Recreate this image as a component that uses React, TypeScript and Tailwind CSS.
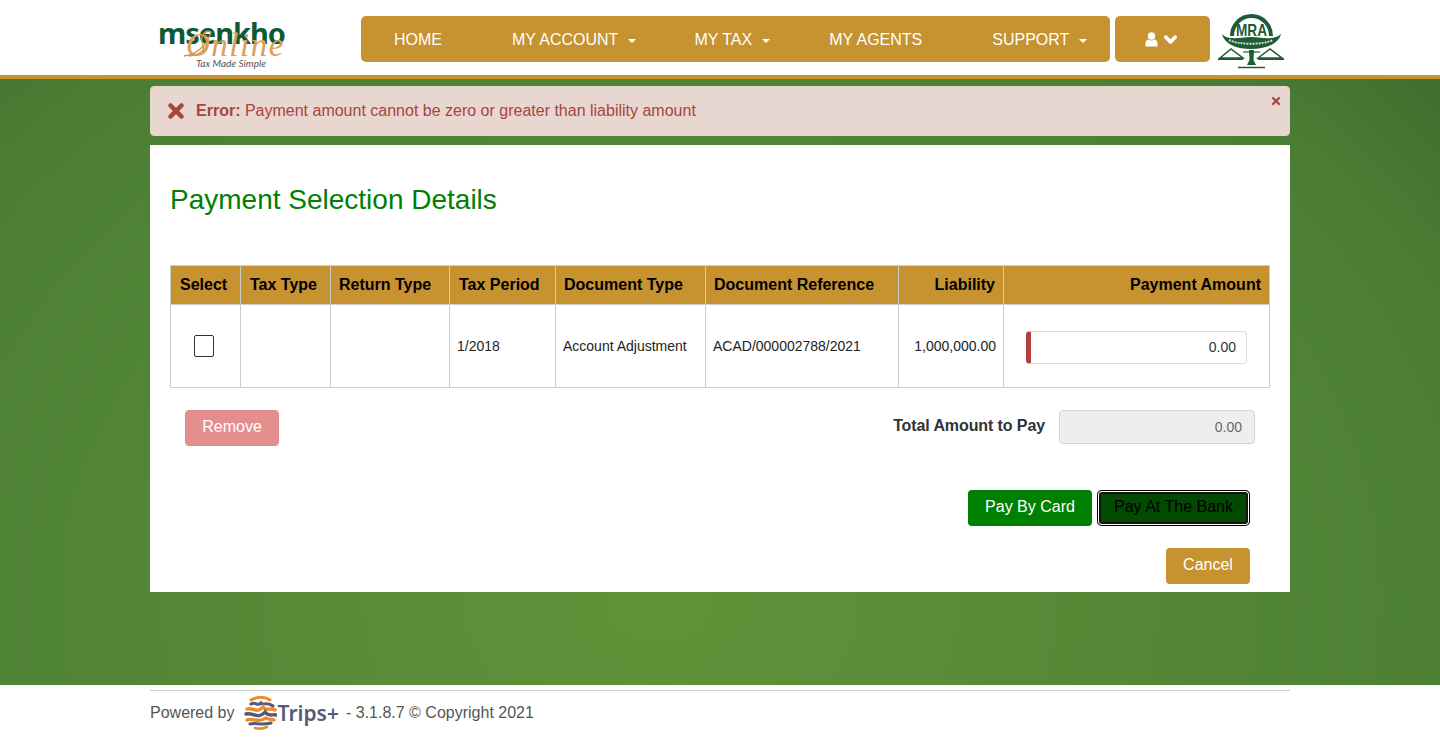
import { ChevronDown, X } from "lucide-react";

const navItems = [
  { label: "HOME", caret: false, gap: "mr-[70px]" },
  { label: "MY ACCOUNT", caret: true, gap: "mr-[58px]" },
  { label: "MY TAX", caret: true, gap: "mr-[59px]" },
  { label: "MY AGENTS", caret: false, gap: "mr-[70px]" },
  { label: "SUPPORT", caret: true, gap: "" },
];

const columns = [
  { label: "Select", width: "w-[70px]", cls: "pl-[9px]" },
  { label: "Tax Type", width: "w-[90px]", cls: "pl-[9px]" },
  { label: "Return Type", width: "w-[119px]", cls: "pl-[8px]" },
  { label: "Tax Period", width: "w-[106px]", cls: "pl-[9px]" },
  { label: "Document Type", width: "w-[150px]", cls: "pl-[8px]" },
  { label: "Document Reference", width: "w-[193px]", cls: "pl-[8px]" },
  { label: "Liability", width: "w-[105px]", cls: "pr-[8px] text-right" },
  { label: "Payment Amount", width: "w-[266px]", cls: "pr-[8px] text-right" },
];

function Caret() {
  return <span className="ml-[10px] inline-block h-0 w-0 border-x-[4px] border-t-[4px] border-x-transparent border-t-white align-middle" />;
}

function MsenkhoLogo() {
  return (
    <div className="relative h-[52px] w-[130px] shrink-0">
      <span className="absolute left-[-1px] top-[-3px] text-[29px] font-bold leading-[34px] tracking-[-1px] text-[#0f5a36] [font-family:'Noto_Sans',sans-serif]">
        msenkho
      </span>
      <span className="absolute left-[27px] top-[8px] text-[33px] italic leading-[36px] tracking-[1.5px] text-[#d9a05c] [font-family:'Liberation_Serif',serif]">
        Online
      </span>
      <svg viewBox="0 0 130 52" className="absolute left-0 top-0 h-[52px] w-[130px]" fill="none">
        <path d="M25 37 C38 36 50 24 52 13 C46 10 40 18 44 26 C47 33 38 36 30 37" stroke="#d5913f" strokeWidth="1.3" />
      </svg>
      <span className="absolute left-[37px] top-[38px] text-[10px] italic leading-[12px] text-[#555] [font-family:'Lato',sans-serif]">
        Tax Made Simple
      </span>
    </div>
  );
}

function MraLogo() {
  return (
    <svg viewBox="0 0 75 62" className="h-[62px] w-[75px] shrink-0" fill="none">
      <path d="M17 26 A19.5 20 0 0 1 56 26" stroke="#1f5c36" strokeWidth="4" />
      <text x="36.5" y="26" textAnchor="middle" fontSize="17" fontWeight="700" fill="#1f5c36" fontFamily="Liberation Sans, sans-serif" textLength="31" lengthAdjust="spacingAndGlyphs">MRA</text>
      <path d="M7 24 C12 30 22 28 36 27 C50 28 60 30 66 24 C64 33 52 39 36 39 C20 39 9 33 7 24 Z" fill="#1f5c36" />
      <path d="M14 30 C24 35 48 35 58 30" stroke="#cfdcd2" strokeWidth="2" strokeDasharray="2 1" />
      <path d="M5 48 L16 39 L28 48 Z M43 48 L55 39 L67 48 Z" stroke="#1f5c36" strokeWidth="1.5" />
      <path d="M3 49 H28 M43 49 H69" stroke="#1f5c36" strokeWidth="2" />
      <path d="M34 40 H39 L38.5 50 L41 55 H32 L34.5 50 Z" fill="#1f5c36" />
      <path d="M28 42 H45" stroke="#1f5c36" strokeWidth="1.2" />
      <path d="M23 57.5 H50" stroke="#1f5c36" strokeWidth="1.5" />
    </svg>
  );
}

function TripsGlobe() {
  return (
    <svg viewBox="0 0 34 36" className="h-[36px] w-[34px] shrink-0" fill="none" strokeLinecap="round">
      <path d="M8 5 C13 2 21 1 27 5" stroke="#f08a24" strokeWidth="3" />
      <path d="M8 9 C12 6 15 12 18 8 C20 11 24 6 30 11" stroke="#55597a" strokeWidth="3" />
      <path d="M4 14 C10 12 14 19 20 12 C23 17 27 12 32 15" stroke="#f08a24" strokeWidth="3.4" />
      <path d="M3 19 C10 17 15 25 22 17 C25 22 29 19 33 20" stroke="#55597a" strokeWidth="3.4" />
      <path d="M4 25 C10 22 15 29 23 23 C26 25 29 24 31 25" stroke="#f08a24" strokeWidth="3.2" />
      <path d="M7 29 C12 27 18 31 28 28" stroke="#55597a" strokeWidth="3" />
      <path d="M12 33 C16 34 20 34 24 32" stroke="#f08a24" strokeWidth="2.6" />
    </svg>
  );
}

export default function App() {
  return (
    <div className="flex min-h-[745px] flex-col bg-white text-[16px] text-[#333] [font-family:'Liberation_Sans',Arial,sans-serif]">
      <header className="h-[79px] border-b-4 border-[#c79230] bg-white">
        <div className="mx-auto flex h-[75px] w-[1140px] items-start">
          <div className="ml-[9px] mt-[19px]">
            <MsenkhoLogo />
          </div>
          <nav className="ml-[72px] mt-4 flex h-[46px] w-[753px] items-center rounded-[5px] bg-[#c79230] pl-[33px] pt-[2px] text-white">
            {navItems.map((item) => (
              <div key={item.label} className={`${item.gap} whitespace-nowrap`}>
                {item.label}
                {item.caret && <Caret />}
              </div>
            ))}
          </nav>
          <button className="ml-[5px] mt-4 flex h-[46px] w-[95px] items-center justify-center gap-[3px] rounded-[5px] bg-[#c79230] text-white">
            <svg viewBox="0 0 14 16" className="h-[15px] w-[13px]" fill="white">
              <circle cx="7" cy="4.2" r="4" />
              <path d="M0.5 15.5 V12 C0.5 9.5 2.5 8 4 8 C5.5 9.3 8.5 9.3 10 8 C11.5 8 13.5 9.5 13.5 12 V15.5 Z" />
            </svg>
            <ChevronDown size={19} strokeWidth={4.5} />
          </button>
          <div className="ml-[5px] mt-[10px]">
            <MraLogo />
          </div>
        </div>
      </header>

      <main className="flex h-[606px] flex-col items-center bg-[radial-gradient(ellipse_1000px_800px_at_660px_520px,#5f9339_0%,#528636_55%,#4b7e33_85%,#3f7030_100%)] pt-[7px]">
        <div className="relative flex h-[50px] w-[1140px] items-center rounded-[4px] border border-[#e3d4cf] bg-[#e8d6d0] pl-[14px] text-[#a94442]">
          <X size={22} strokeWidth={5} className="shrink-0" />
          <p className="ml-[9px]">
            <b>Error:</b> Payment amount cannot be zero or greater than liability amount
          </p>
          <X size={12} strokeWidth={4.5} className="absolute right-[7px] top-[8px]" />
        </div>

        <section className="mt-[9px] h-[447px] w-[1140px] bg-white px-5">
          <h1 className="pt-[37px] text-[28px] leading-[36px] text-[#008000]">Payment Selection Details</h1>

          <table className="mt-[47px] w-[1099px] table-fixed border-collapse">
            <thead>
              <tr className="h-[39px] bg-[#c79230] text-black">
                {columns.map((col) => (
                  <th key={col.label} className={`${col.width} ${col.cls} whitespace-nowrap border border-[#ccc] text-left text-[16px] font-bold`}>
                    {col.label}
                  </th>
                ))}
              </tr>
            </thead>
            <tbody className="text-[14px] text-[#222]">
              <tr className="h-[83px]">
                <td className="border border-[#ccc]">
                  <span className="ml-[23px] block h-[22px] w-[20px] rounded-[2px] border border-[#333] bg-white" />
                </td>
                <td className="border border-[#ccc]" />
                <td className="border border-[#ccc]" />
                <td className="border border-[#ccc] pl-[7px]">1/2018</td>
                <td className="border border-[#ccc] pl-[7px] whitespace-nowrap">Account Adjustment</td>
                <td className="border border-[#ccc] pl-[7px] whitespace-nowrap">ACAD/000002788/2021</td>
                <td className="border border-[#ccc] pr-[7px] text-right">1,000,000.00</td>
                <td className="border border-[#ccc] pl-[22px] pr-[22px] pt-[3px]">
                  <div className="flex h-[33px] items-center justify-end rounded-[4px] border border-l-[5px] border-[#ddd] border-l-[#b04040] bg-white pr-[10px] text-[14px] text-[#333]">
                    0.00
                  </div>
                </td>
              </tr>
            </tbody>
          </table>

          <div className="mt-[22px] flex items-start justify-between pl-[15px] pr-[15px]">
            <button className="h-[36px] w-[94px] rounded-[4px] border border-[#e08a8a] bg-[#e58e8e] pb-[2px] text-white">Remove</button>
            <div className="flex items-start">
              <span className="mt-[4px] font-bold tracking-[-0.1px] text-[#333]">Total Amount to Pay</span>
              <div className="ml-[14px] flex h-[34px] w-[196px] items-center justify-end rounded-[4px] border border-[#d4d4d4] bg-[#eee] pr-[12px] text-[14px] text-[#666]">
                0.00
              </div>
            </div>
          </div>

          <div className="mt-[44px] flex justify-end gap-[5px] pr-[20px]">
            <button className="h-[36px] w-[124px] rounded-[4px] bg-[#008000] pb-[2px] text-white">Pay By Card</button>
            <button className="h-[36px] w-[153px] rounded-[5px] bg-[#024a02] pb-[2px] text-black shadow-[inset_0_0_0_1px_#000,inset_0_0_0_2px_#fff,inset_0_0_0_4px_#111]">
              Pay At The Bank
            </button>
          </div>

          <div className="mt-[22px] flex justify-end pr-[20px]">
            <button className="h-[36px] w-[84px] rounded-[4px] bg-[#c79230] pb-[2px] text-white">Cancel</button>
          </div>
        </section>
      </main>

      <footer className="h-[60px] bg-white">
        <div className="mx-auto mt-[5px] flex h-[45px] w-[1140px] items-center border-t border-[#ccc] text-[#555]">
          <span>Powered by</span>
          <span className="ml-2">
            <TripsGlobe />
          </span>
          <span className="ml-[1px] text-[21px] font-semibold leading-[34px] text-[#55597a] [font-family:'Noto_Sans',sans-serif]">Trips+</span>
          <span className="ml-[7px]">- 3.1.8.7 © Copyright 2021</span>
        </div>
      </footer>
    </div>
  );
}
